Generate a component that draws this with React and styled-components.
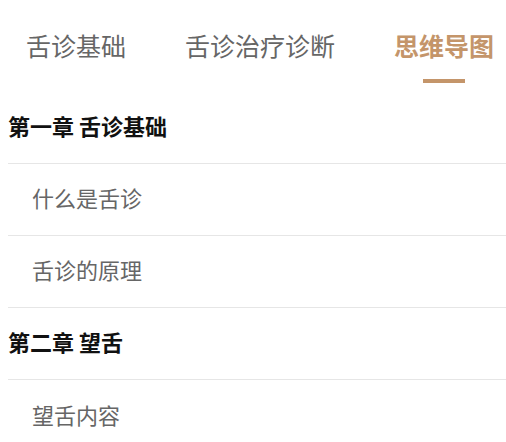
import React from "react";
import styled, { createGlobalStyle } from "styled-components";

const Global = createGlobalStyle`
  html, body { margin: 0; padding: 0; background: #fff; }
  body { font-family: "Noto Sans CJK SC", "Noto Sans", sans-serif; }
`;

const Page = styled.div`
  width: 506px;
`;

const TabBar = styled.div`
  display: flex;
  align-items: flex-start;
  gap: 59px;
  padding-left: 26px;
  height: 92px;
  box-sizing: border-box;
`;

const Tab = styled.div`
  display: flex;
  flex-direction: column;
  align-items: center;
  padding-top: 28px;
  font-size: 25px;
  line-height: 35px;
  color: ${(p) => (p.$active ? "#c4956a" : "#666")};
  font-weight: ${(p) => (p.$active ? 700 : 400)};
  white-space: nowrap;
`;

const Underline = styled.div`
  width: 42px;
  height: 4px;
  margin-top: 16px;
  background: ${(p) => (p.$show ? "#c4956a" : "transparent")};
`;

const List = styled.div`
  margin-left: 8px;
`;

const Row = styled.div`
  height: 72px;
  box-sizing: border-box;
  padding-bottom: 5px;
  display: flex;
  align-items: center;
  border-bottom: ${(p) => (p.$last ? "none" : "1px solid #e6e6e6")};
  padding-left: ${(p) => (p.$chapter ? "0" : "24px")};
  font-size: 22px;
  color: ${(p) => (p.$chapter ? "#111" : "#666")};
  font-weight: ${(p) => (p.$chapter ? 700 : 400)};
`;

const tabs = ["舌诊基础", "舌诊治疗诊断", "思维导图"];
const rows = [
  { t: "第一章 舌诊基础", c: true },
  { t: "什么是舌诊" },
  { t: "舌诊的原理" },
  { t: "第二章 望舌", c: true },
  { t: "望舌内容" },
];

export default function App() {
  return (
    <Page>
      <Global />
      <TabBar>
        {tabs.map((t, i) => (
          <Tab key={t} $active={i === 2}>
            {t}
            <Underline $show={i === 2} />
          </Tab>
        ))}
      </TabBar>
      <List>
        {rows.map((r, i) => (
          <Row key={r.t} $chapter={r.c} $last={i === rows.length - 1}>
            {r.t}
          </Row>
        ))}
      </List>
    </Page>
  );
}
